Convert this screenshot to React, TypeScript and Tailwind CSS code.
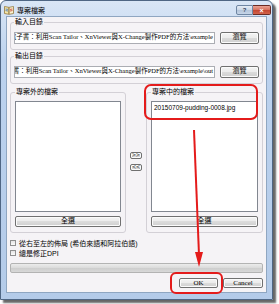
import React from "react";

const sans = "font-['Liberation_Sans','Noto_Sans_CJK_TC',sans-serif]";
const serif = "font-['Liberation_Serif','Noto_Sans_CJK_TC',serif]";

const WinButton: React.FC<{ label: string; className?: string }> = ({ label, className = "" }) => (
  <button
    type="button"
    className={`flex shrink-0 items-center justify-center rounded-[2px] border border-[#707070] bg-[linear-gradient(#f4f4f4,#ebebeb_50%,#dcdcdc_50%,#cfcfcf)] text-[7px] leading-none text-black shadow-[inset_0_0_0_1px_#fbfbfb] ${serif} ${className}`}
  >
    {label}
  </button>
);

const GroupBox: React.FC<{ title: string; className?: string; children: React.ReactNode }> = ({
  title,
  className = "",
  children,
}) => (
  <fieldset className={`min-w-0 rounded-[3px] border border-[#d3d0d6] ${className}`}>
    <legend className="px-[1px] text-[7px] leading-[8px] text-black">{title}</legend>
    {children}
  </fieldset>
);

const PathBox: React.FC<{ value: string }> = ({ value }) => (
  <div className="flex h-[12px] min-w-0 flex-1 items-center justify-end overflow-hidden border border-[#abadb3] bg-white pr-[1px]">
    <span className={`shrink-0 whitespace-nowrap text-[6.5px] leading-none ${serif}`}>{value}</span>
  </div>
);

const CheckRow: React.FC<{ label: string }> = ({ label }) => (
  <div className="flex h-[10px] items-center gap-[3px]">
    <div className="h-[6px] w-[6px] border border-[#8f8f8f] bg-[linear-gradient(#e4e4e4,#fafafa)]" />
    <span className="text-[7px] leading-none">{label}</span>
  </div>
);

export default function App() {
  return (
    <div className={`relative h-[304px] w-[279px] overflow-hidden bg-white ${sans}`}>
      <div className="flex h-[300px] w-[273px] flex-col rounded-t-[6px] border border-[#4f6684] bg-[linear-gradient(#d9e6f6,#bcd2ee_20%,#b4cbe9)] shadow-[3px_3px_2px_rgba(0,0,0,0.6)]">
        {/* title bar */}
        <div className="flex h-[18px] items-start pl-[3px] pr-[1px]">
          <div className="mt-[4px] flex items-center gap-[3px]">
            <svg width="10" height="10" viewBox="0 0 10 10">
              <path d="M0.5 1.5 L4.8 2.3 L4.8 9.3 L0.5 8.5 Z" fill="#f6e7a6" stroke="#8a6a2a" strokeWidth="0.7" />
              <path d="M5.2 2.3 L9.5 1.5 L9.5 8.5 L5.2 9.3 Z" fill="#fbf3cf" stroke="#8a6a2a" strokeWidth="0.7" />
              <path d="M1.5 4 L4 4.4 M1.5 5.6 L4 6" stroke="#3a6fc4" strokeWidth="0.8" />
              <path d="M6 4.4 L8.5 4 M6 6 L8.5 5.6" stroke="#c0392b" strokeWidth="0.8" />
            </svg>
            <span className="text-[7px] leading-none text-black">專案檔案</span>
          </div>
          <div className="ml-auto mt-[4px] flex">
            <div className="flex h-[10px] w-[17px] items-center justify-center rounded-l-[2px] border border-[#6f86a3] bg-[linear-gradient(#e6edf6,#c9d6e6_50%,#b3c4da_50%,#c6d5e8)] text-[6px] font-bold leading-none text-[#33445a]">
              ?
            </div>
            <div className="flex h-[10px] w-[18px] items-center justify-center rounded-r-[2px] border border-l-0 border-[#6b2a22] bg-[linear-gradient(#e9a293,#d6705c_50%,#c24530_50%,#d2634a)] text-[7px] font-bold leading-none text-white">
              ×
            </div>
          </div>
        </div>

        {/* client area */}
        <div className="mx-[5px] mb-[6px] flex min-w-0 flex-1 flex-col border border-[#8fa6c1] bg-[#f5f3f6] px-[3px] pb-[4px] pt-[1px] text-black">
          <GroupBox title="輸入目錄" className="px-[3px] pb-[5px]">
            <div className="mt-[5px] flex h-[13px] items-center gap-[5px]">
              <PathBox value="D:\電子書：利用Scan Tailor、XnViewer與X-Change製作PDF的方法\example" />
              <WinButton label="瀏覽" className="h-[12px] w-[39px]" />
            </div>
          </GroupBox>

          <GroupBox title="輸出目錄" className="mt-[2px] px-[3px] pb-[5px]">
            <div className="mt-[5px] flex h-[13px] items-center gap-[5px]">
              <PathBox value="D:\電子書：利用Scan Tailor、XnViewer與X-Change製作PDF的方法\example\out" />
              <WinButton label="瀏覽" className="h-[12px] w-[39px]" />
            </div>
          </GroupBox>

          <div className="mt-[4px] flex">
            <GroupBox title="專案外的檔案" className="w-[116px] px-[4px] pb-[5px]">
              <div className="mt-[5px] h-[111px] border border-[#828790] bg-white" />
              <WinButton label="全選" className="mt-[4px] h-[11px] w-full" />
            </GroupBox>
            <div className="flex w-[20px] flex-col items-center justify-center gap-[5px] pt-[2px]">
              <WinButton label=">>" className="h-[7px] w-[12px] text-[5px]" />
              <WinButton label="<<" className="h-[7px] w-[12px] text-[5px]" />
            </div>
            <GroupBox title="專案中的檔案" className="flex-1 px-[4px] pb-[5px]">
              <div className="mt-[5px] h-[111px] border border-[#828790] bg-white px-[2px] pt-[2px]">
                <div className={`text-[6.5px] leading-[8px] ${sans}`}>20150709-pudding-0008.jpg</div>
              </div>
              <WinButton label="全選" className="mt-[4px] h-[11px] w-full" />
            </GroupBox>
          </div>

          <div className="mt-[5px] flex flex-col">
            <CheckRow label="從右至左的佈局 (希伯來語和阿拉伯語)" />
            <CheckRow label="總是修正DPI" />
          </div>

          <div className="mt-[5px] h-[10px] rounded-[2px] border border-[#b3b3b3] bg-[linear-gradient(#ececec,#dadada_50%,#cdcdcd_50%,#d8d8d8)]" />

          <div className="mt-[5px] flex justify-end gap-[5px]">
            <WinButton label="OK" className="h-[10px] w-[39px]" />
            <WinButton label="Cancel" className="h-[10px] w-[40px]" />
          </div>
        </div>
      </div>

      {/* red annotations drawn over the screenshot */}
      <svg className="pointer-events-none absolute inset-0" width="279" height="304" viewBox="0 0 279 304">
        <rect x="145" y="85" width="112" height="34" rx="6" fill="none" stroke="#e41b1b" strokeWidth="2" />
        <rect x="171" y="273" width="51" height="20" rx="5" fill="none" stroke="#e41b1b" strokeWidth="2" />
        <path d="M194 130 Q197 200 199 255" fill="none" stroke="#e41b1b" strokeWidth="2" />
        <polygon points="195,252 203,252 199,267" fill="#e41b1b" />
      </svg>
    </div>
  );
}
